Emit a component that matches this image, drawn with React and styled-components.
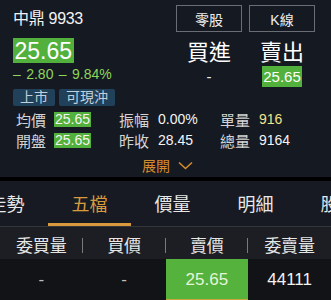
import React from "react";
import styled, { createGlobalStyle } from "styled-components";

const Global = createGlobalStyle`
  html, body { margin: 0; padding: 0; background: #141820; }
  body { font-family: "Liberation Sans", "Noto Sans CJK TC", sans-serif; overflow: hidden; }
  * { box-sizing: border-box; }
`;

const Page = styled.div`
  width: 331px;
  height: 300px;
  overflow: hidden;
  background: #151922;
  color: #fff;
`;

const Quote = styled.div`
  display: flex;
  justify-content: space-between;
  padding: 5px 16px 0 13px;
`;

const LeftCol = styled.div`
  display: flex;
  flex-direction: column;
  align-items: flex-start;
`;

const Title = styled.div`
  font-size: 16px;
  line-height: 18px;
  margin-top: 5px;
  color: #f2f2f2;
  letter-spacing: -0.3px;
`;

const PriceBox = styled.div`
  margin-top: 10px;
  background: #52b03c;
  color: #fff;
  font-size: 23px;
  line-height: 23px;
  height: 25px;
  padding: 2px 1.5px 0;
`;

const Change = styled.div`
  color: #8fd65a;
  font-size: 14px;
  line-height: 16px;
  margin-top: 3px;
  word-spacing: 1.5px;
`;

const Badges = styled.div`
  display: flex;
  gap: 4px;
  margin-top: 7px;
`;

const Badge = styled.span`
  background: #21405a;
  color: #c2d0dd;
  font-size: 14px;
  line-height: 17px;
  height: 17px;
  padding: 0 7px;
  border-radius: 2px;
`;

const RightCol = styled.div`
  display: grid;
  grid-template-columns: 66px 66px;
  column-gap: 7px;
  justify-items: center;
  align-content: start;
`;

const OutlineButton = styled.div`
  width: 66px;
  height: 27px;
  border: 1px solid #6a6d73;
  display: flex;
  align-items: center;
  justify-content: center;
  font-size: 14px;
  color: #eee;
`;

const SideLabel = styled.div`
  margin-top: 8px;
  font-size: 22px;
  line-height: 26px;
  color: #fff;
`;

const SideValue = styled.div`
  font-size: 15px;
  line-height: 21px;
  height: 21px;
  padding: 0 1px;
  color: ${(p) => (p.$hl ? "#fff" : "#eee")};
  background: ${(p) => (p.$hl ? "#52b03c" : "transparent")};
`;

const Stats = styled.div`
  display: grid;
  grid-template-columns: 103px 101px 1fr;
  row-gap: 6px;
  padding: 6px 0 0 16px;
`;

const Stat = styled.div`
  display: flex;
  align-items: center;
  gap: 8px;
  height: 15px;
`;

const StatLabel = styled.span`
  font-size: 15px;
  color: #d4d4d4;
`;

const StatValue = styled.span`
  font-size: 14px;
  line-height: 15px;
  padding: 0 1px;
  color: ${(p) => p.$color || "#f4f4f4"};
  background: ${(p) => (p.$hl ? "#52b03c" : "transparent")};
`;

const Expand = styled.div`
  display: flex;
  justify-content: center;
  align-items: center;
  gap: 8px;
  height: 24px;
  margin-top: 5px;
  color: #d48b2c;
  font-size: 14px;
  padding-left: 4px;
`;

const Separator = styled.div`
  height: 4px;
  background: #000;
`;

const TabBar = styled.div`
  height: 46px;
  background: #171a23;
  border-bottom: 1px solid #34363c;
  overflow: hidden;
`;

const TabTrack = styled.div`
  display: flex;
  margin-left: -35px;
  height: 100%;
`;

const Tab = styled.div`
  flex: 0 0 83px;
  display: flex;
  align-items: center;
  justify-content: center;
  font-size: 18px;
  color: ${(p) => (p.$active ? "#d99a3e" : "#e8e8e8")};
  border-bottom: 3px solid ${(p) => (p.$active ? "#d99a3e" : "transparent")};
  padding-top: 2px;
`;

const Row = styled.div`
  display: grid;
  grid-template-columns: repeat(4, 1fr);
  height: ${(p) => p.$h}px;
  background: ${(p) => p.$bg};
`;

const HeadCell = styled.div`
  display: flex;
  align-items: center;
  justify-content: center;
  position: relative;
  font-size: 17px;
  color: #e6e6e6;
  padding-top: 3px;
  &:not(:last-child)::after {
    content: "";
    position: absolute;
    right: 0;
    top: 11px;
    width: 1px;
    height: 15px;
    background: #7a7a7a;
  }
`;

const Cell = styled.div`
  display: flex;
  align-items: center;
  justify-content: center;
  font-size: 17px;
  color: ${(p) => (p.$hl ? "#e4f5da" : p.$dim ? "#bdbdbd" : "#f2f2f2")};
  background: ${(p) => (p.$hl ? "#55b23c" : "transparent")};
  border-bottom: 2px solid ${(p) => (p.$hl ? "#c9a53a" : "transparent")};
  padding-top: 2px;
`;

const Chevron = () => (
  <svg width="15" height="9" viewBox="0 0 15 9" fill="none">
    <path d="M1 1.5 L7.5 7.5 L14 1.5" stroke="#d48b2c" strokeWidth="1.6" />
  </svg>
);

export default function App() {
  return (
    <Page>
      <Global />
      <Quote>
        <LeftCol>
          <Title>中鼎 9933</Title>
          <PriceBox>25.65</PriceBox>
          <Change>– 2.80 – 9.84%</Change>
          <Badges>
            <Badge>上市</Badge>
            <Badge>可現沖</Badge>
          </Badges>
        </LeftCol>
        <RightCol>
          <OutlineButton>零股</OutlineButton>
          <OutlineButton>K線</OutlineButton>
          <SideLabel>買進</SideLabel>
          <SideLabel>賣出</SideLabel>
          <SideValue>-</SideValue>
          <SideValue $hl>25.65</SideValue>
        </RightCol>
      </Quote>
      <Stats>
        <Stat>
          <StatLabel>均價</StatLabel>
          <StatValue $hl>25.65</StatValue>
        </Stat>
        <Stat>
          <StatLabel>振幅</StatLabel>
          <StatValue>0.00%</StatValue>
        </Stat>
        <Stat>
          <StatLabel>單量</StatLabel>
          <StatValue $color="#efe58a">916</StatValue>
        </Stat>
        <Stat>
          <StatLabel>開盤</StatLabel>
          <StatValue $hl>25.65</StatValue>
        </Stat>
        <Stat>
          <StatLabel>昨收</StatLabel>
          <StatValue>28.45</StatValue>
        </Stat>
        <Stat>
          <StatLabel>總量</StatLabel>
          <StatValue>9164</StatValue>
        </Stat>
      </Stats>
      <Expand>
        <span>展開</span>
        <Chevron />
      </Expand>
      <Separator />
      <TabBar>
        <TabTrack>
          <Tab>走勢</Tab>
          <Tab $active>五檔</Tab>
          <Tab>價量</Tab>
          <Tab>明細</Tab>
          <Tab>股利</Tab>
        </TabTrack>
      </TabBar>
      <Row $h={32} $bg="#1d1e23">
        <HeadCell>委買量</HeadCell>
        <HeadCell>買價</HeadCell>
        <HeadCell>賣價</HeadCell>
        <HeadCell>委賣量</HeadCell>
      </Row>
      <Row $h={42} $bg="#121317">
        <Cell $dim>-</Cell>
        <Cell $dim>-</Cell>
        <Cell $hl>25.65</Cell>
        <Cell>44111</Cell>
      </Row>
    </Page>
  );
}
